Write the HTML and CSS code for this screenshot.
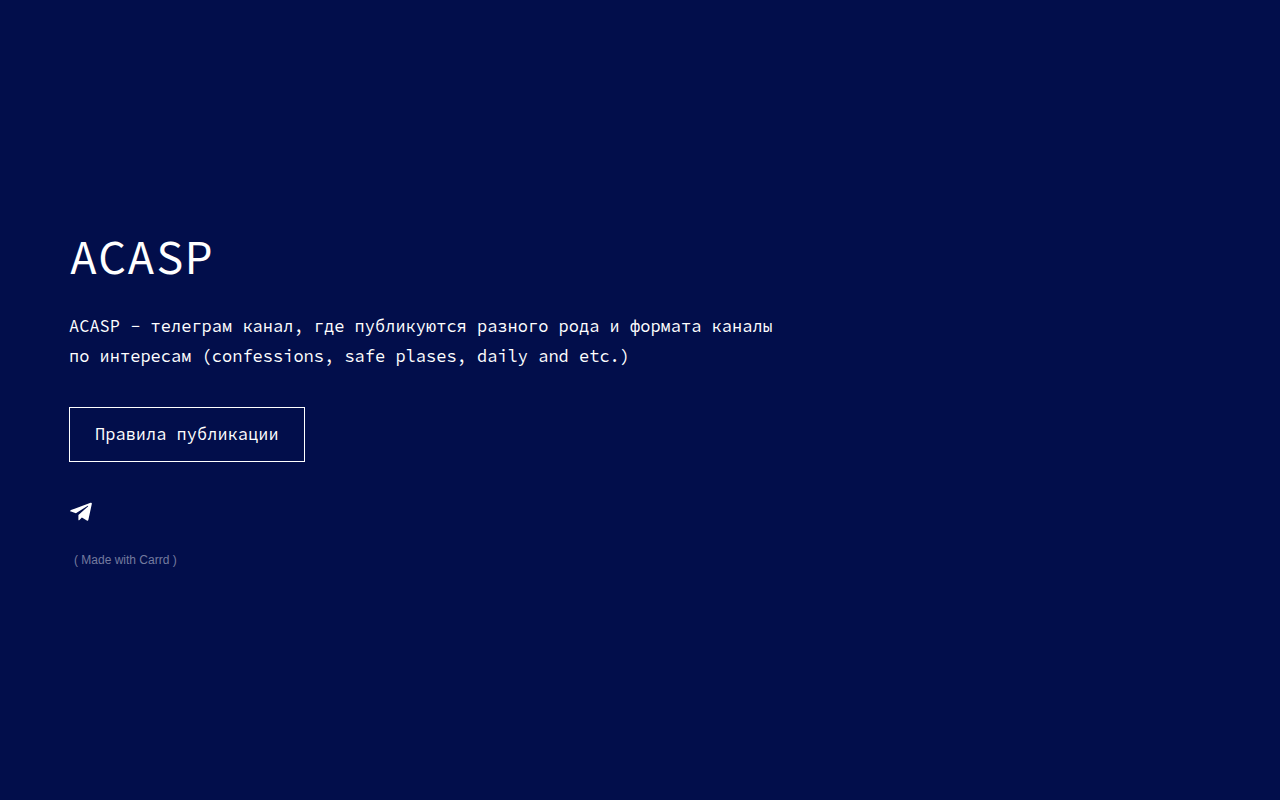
FILE: index.html
```html
<!DOCTYPE html>
<html lang="ru">
<head>
    <meta charset="utf-8">
    <meta name="viewport" content="width=device-width, initial-scale=1">
    <title>ACASP</title>
    <link rel="stylesheet" href="styles.css">
</head>
<body>

    <main class="container">
        <h1>ACASP</h1>

        <p>ACASP − телеграм канал, где публикуются разного рода и формата каналы<br>
        по интересам (confessions, safe plases, daily and etc.)</p>

        <a class="button" href="#rules">Правила публикации</a>

        <a class="icon" href="#telegram" aria-label="Telegram">
            <svg viewBox="-1 0 23 19" width="23" height="19" fill="currentColor" aria-hidden="true">
                <path d="M20.6.8 1 8.1c-1.1.5-1.1 1.1 0 1.5l4.9 1.6L17.4 4c.6-.4 1 0 .6.4L8.4 13v4.7c0 .7.5.8 1 .3l2.5-2.4 4.9 3c.8.5 1.4.2 1.6-.8L21.8 2c.2-1-.3-1.5-1.2-1.2z"/>
            </svg>
        </a>

        <a class="credits" href="#carrd">( Made with Carrd )</a>
    </main>

</body>
</html>
```

FILE: styles.css
```css
* {
    box-sizing: border-box;
}

body {
    font-family: "Source Code Pro", "Liberation Mono", monospace;
    background-color: #020e4b;
    color: #fff;
    margin: 0;
    min-height: 100vh;
    display: flex;
    align-items: center;
}

.container {
    display: flex;
    flex-direction: column;
    align-items: flex-start;
    width: 100%;
    max-width: 860px;
    padding: 0 69px 4px;
}

h1 {
    font-size: 48px;
    font-weight: 400;
    line-height: 60px;
    margin: 0 0 24px;
}

p {
    font-size: 17px;
    line-height: 30px;
    margin: 0 0 36px;
}

a {
    color: #fff;
    text-decoration: none;
}

.button {
    font-size: 17px;
    line-height: 53px;
    padding: 0 25px;
    border: 1px solid #fff;
    margin-bottom: 40px;
}

.button:hover {
    background-color: rgba(255, 255, 255, 0.1);
}

.icon {
    display: flex;
    margin-bottom: 30px;
}

.credits {
    font-family: "Liberation Sans", Arial, sans-serif;
    font-size: 12px;
    line-height: 18px;
    padding: 0 5px;
    color: #747b9f;
}
```
